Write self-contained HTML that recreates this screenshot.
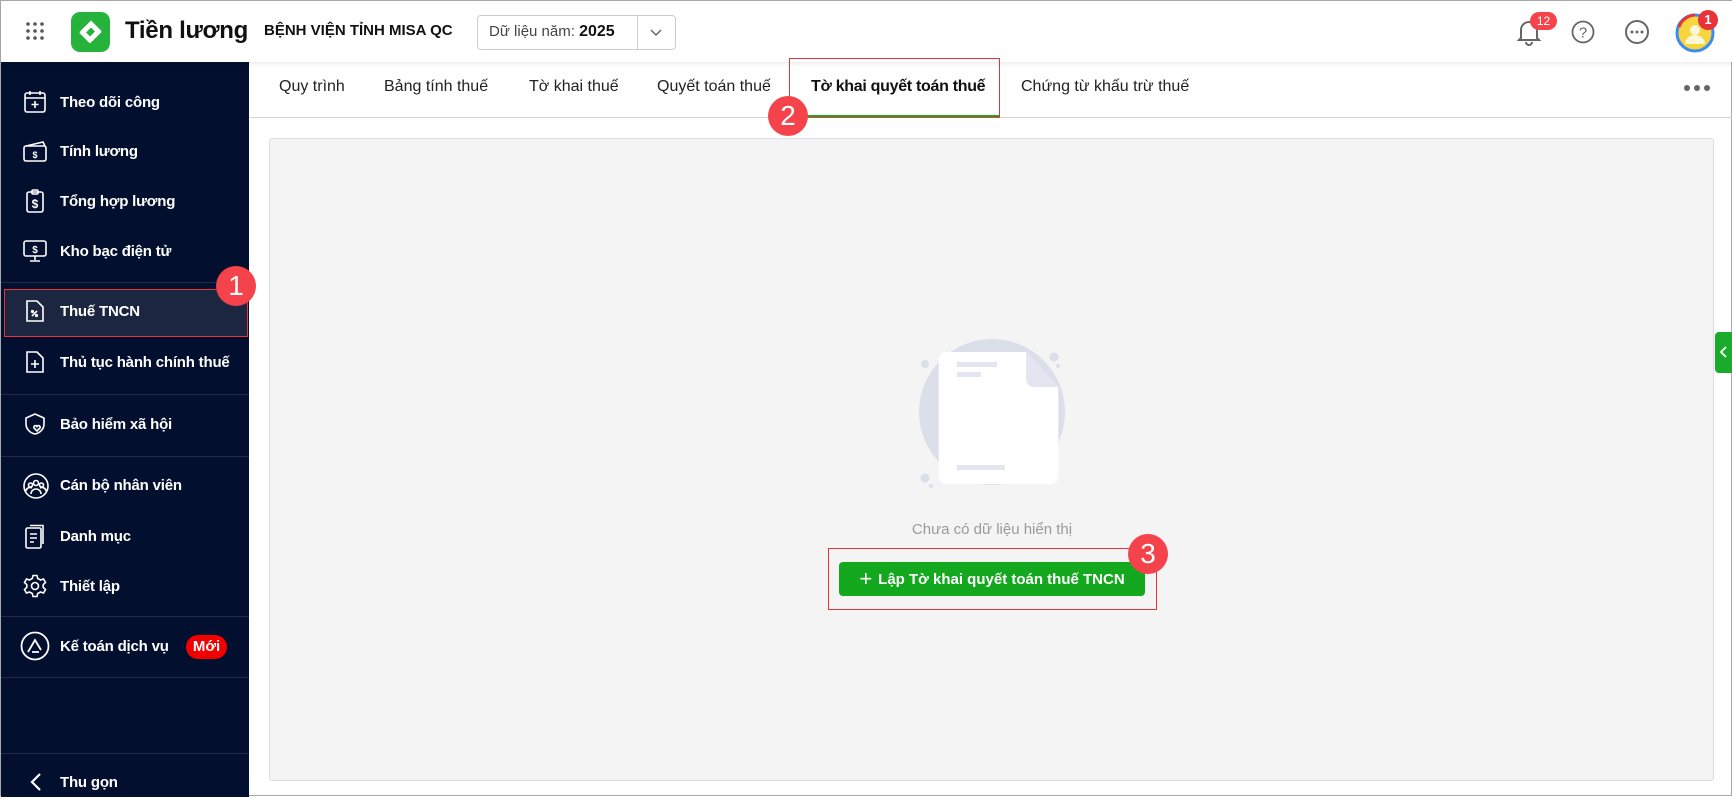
<!DOCTYPE html>
<html><head><meta charset="utf-8"><style>
*{box-sizing:border-box;margin:0;padding:0}
body{width:1732px;height:796px;overflow:hidden;background:#fff;font-family:"Liberation Sans",sans-serif;position:relative;border:1px solid #aaa}
.abs{position:absolute}
.hdr{left:0;top:0;width:1732px;height:61px;background:#fff;box-shadow:0 2px 4px rgba(0,0,0,.08);z-index:2}
.side{left:0;top:61px;width:248px;height:735px;background:#020f2e}
.it{position:absolute;left:0;width:248px;height:40px;color:#fff;font-size:15px;font-weight:bold;display:flex;align-items:center}
.it span{position:absolute;left:59px;letter-spacing:-0.2px}
.it svg{position:absolute;left:22px;top:8px}
.dv{position:absolute;left:0;width:248px;height:1px;background:#1f2a47}
.tab{position:absolute;top:77px;font-size:16px;color:#222}
.badge{position:absolute;width:40px;height:40px;border-radius:50%;background:#f4434a;color:#fff;font-size:28px;text-align:center;line-height:40px;font-weight:normal;z-index:4}
</style></head><body>
<div class="abs hdr">
 <svg class="abs" style="left:24px;top:20px" width="20" height="20"><g fill="#555"><circle cx="3" cy="3" r="1.8"/><circle cx="10" cy="3" r="1.8"/><circle cx="17" cy="3" r="1.8"/><circle cx="3" cy="10" r="1.8"/><circle cx="10" cy="10" r="1.8"/><circle cx="17" cy="10" r="1.8"/><circle cx="3" cy="17" r="1.8"/><circle cx="10" cy="17" r="1.8"/><circle cx="17" cy="17" r="1.8"/></g></svg>
 <div class="abs" style="left:70px;top:11px;width:39px;height:40px;border-radius:9px;background:#25b33b"></div>
 <svg class="abs" style="left:70px;top:11px" width="39" height="40"><g stroke="#fff" stroke-width="5" fill="none" stroke-linecap="square"><path d="M12 20 L20 12 L27 19"/><path d="M12 21 L19 28 L27 20"/></g></svg>
 <div class="abs" style="left:124px;top:16px;font-size:24px;font-weight:bold;color:#111;letter-spacing:-0.3px">Tiền lương</div>
 <div class="abs" style="left:263px;top:21px;font-size:15px;font-weight:bold;color:#111">BỆNH VIỆN TỈNH MISA QC</div>
 <div class="abs" style="left:476px;top:14px;width:199px;height:35px;border:1px solid #ccc;border-radius:4px"></div>
 <div class="abs" style="left:636px;top:14px;width:1px;height:35px;background:#ccc"></div>
 <div class="abs" style="left:488px;top:22px;font-size:15px;color:#444">Dữ liệu năm: <b style="color:#111;font-size:16px">2025</b></div>
 <svg class="abs" style="left:648px;top:24px" width="14" height="14"><path d="M2 5 L7 10 L12 5" stroke="#666" stroke-width="1.5" fill="none"/></svg>
 <svg class="abs" style="left:1514px;top:16px" width="28" height="30"><path d="M6 21 V13 a8 8 0 0 1 16 0 V21 L24 23 H4 Z M11 25 a3 3 0 0 0 6 0" stroke="#666" stroke-width="2" fill="none"/></svg>
 <div class="abs" style="left:1529px;top:11px;width:27px;height:18px;border-radius:9px;background:#f4434a;color:#fff;font-size:12px;text-align:center;line-height:18px">12</div>
 <svg class="abs" style="left:1569px;top:18px" width="26" height="26"><circle cx="13" cy="13" r="10.5" stroke="#666" stroke-width="1.8" fill="none"/><text x="13" y="18.5" font-size="15" text-anchor="middle" fill="#666" font-family="Liberation Sans">?</text></svg>
 <svg class="abs" style="left:1623px;top:18px" width="26" height="26"><circle cx="13" cy="13" r="11" stroke="#666" stroke-width="2" fill="none"/><g fill="#666"><circle cx="8" cy="13" r="1.5"/><circle cx="13" cy="13" r="1.5"/><circle cx="18" cy="13" r="1.5"/></g></svg>
 <svg class="abs" style="left:1673px;top:10px" width="42" height="42"><circle cx="21" cy="22" r="18" fill="#f6d53f" stroke="#3b8cf0" stroke-width="3"/><path d="M5 16 A18 18 0 0 1 21 4" stroke="#e8333a" stroke-width="3" fill="none"/><circle cx="21" cy="19" r="5" fill="#fff" opacity=".8"/><path d="M11 33 a10 9 0 0 1 20 0" fill="#fff" opacity=".8"/></svg>
 <div class="abs" style="left:1697px;top:9px;width:20px;height:20px;border-radius:50%;background:#e8333a;color:#fff;font-size:13px;font-weight:bold;text-align:center;line-height:20px">1</div>
</div>
<div class="abs side">
 <div class="it" style="top:20px"><svg width="24" height="24" fill="none" stroke="#fff" stroke-width="1.6"><rect x="2" y="3" width="20" height="19" rx="2"/><path d="M2 8 H22 M7 1 V5 M17 1 V5 M12 11 V18 M8.5 14.5 H15.5"/></svg><span>Theo dõi công</span></div>
 <div class="it" style="top:69px"><svg width="26" height="24" fill="none" stroke="#fff" stroke-width="1.6"><rect x="1" y="7" width="22" height="15" rx="2"/><path d="M3 7 L20 3 L22 7"/><text x="12" y="19" font-size="9" fill="#fff" stroke="none" text-anchor="middle" font-family="Liberation Sans" font-weight="bold">$</text></svg><span>Tính lương</span></div>
 <div class="it" style="top:119px"><svg width="24" height="24" fill="none" stroke="#fff" stroke-width="1.6"><rect x="4" y="3" width="16" height="20" rx="2"/><rect x="9" y="1" width="6" height="4" rx="1"/><text x="12" y="19" font-size="12" fill="#fff" stroke="none" text-anchor="middle" font-family="Liberation Sans" font-weight="bold">$</text></svg><span>Tổng hợp lương</span></div>
 <div class="it" style="top:169px"><svg width="24" height="24" fill="none" stroke="#fff" stroke-width="1.6"><rect x="1" y="2" width="22" height="15" rx="2"/><path d="M12 17 V21 M7 22 H17"/><text x="12" y="14" font-size="10" fill="#fff" stroke="none" text-anchor="middle" font-family="Liberation Sans" font-weight="bold">$</text></svg><span>Kho bạc điện tử</span></div>
 <div class="dv" style="top:220px"></div>
 <div class="abs" style="left:3px;top:227px;width:244px;height:48px;background:#1c2641;border:1.5px solid #e8333a"></div>
 <div class="it" style="top:229px"><svg width="24" height="24" fill="none" stroke="#fff" stroke-width="1.6"><path d="M4 2 H14 L20 8 V22 H4 Z"/><path d="M9 17 L14 12"/><circle cx="9.5" cy="12.5" r=".8"/><circle cx="13.5" cy="16.5" r=".8"/></svg><span>Thuế TNCN</span></div>
 <div class="badge" style="left:215px;top:204px">1</div>
 <div class="it" style="top:280px"><svg width="24" height="24" fill="none" stroke="#fff" stroke-width="1.6"><path d="M4 2 H14 L20 8 V22 H4 Z"/><path d="M12 10 V18 M8 14 H16"/></svg><span>Thủ tục hành chính thuế</span></div>
 <div class="dv" style="top:332px"></div>
 <div class="it" style="top:342px"><svg width="24" height="24" fill="none" stroke="#fff" stroke-width="1.6"><path d="M12 2 L21 6 V12 C21 17 17 21 12 22 C7 21 3 17 3 12 V6 Z"/><path d="M14 19 l3 -3 a1.5 1.5 0 0 0 -3 -1.5 a1.5 1.5 0 0 0 -3 1.5 Z" fill="#020f2e"/></svg><span>Bảo hiểm xã hội</span></div>
 <div class="dv" style="top:394px"></div>
 <div class="it" style="top:403px"><svg width="26" height="26" fill="none" stroke="#fff" stroke-width="1.6"><circle cx="13" cy="13" r="12"/><circle cx="13" cy="10" r="2.5"/><circle cx="7.5" cy="12" r="2"/><circle cx="18.5" cy="12" r="2"/><path d="M8 21 a5 5 0 0 1 10 0 M3 18 a4 4 0 0 1 6 -3 M23 18 a4 4 0 0 0 -6 -3"/></svg><span>Cán bộ nhân viên</span></div>
 <div class="it" style="top:454px"><svg width="24" height="26" fill="none" stroke="#fff" stroke-width="1.6"><rect x="3" y="4" width="15" height="20" rx="1.5"/><path d="M7 1.5 H20 V20 M7 10 H14 M7 14 H14 M7 18 H11"/></svg><span>Danh mục</span></div>
 <div class="it" style="top:504px"><svg width="24" height="24" fill="none" stroke="#fff" stroke-width="1.6"><path d="M10 1.5 H14 L14.7 4.5 L17.5 6 L20.5 5 L22.5 8.5 L20.2 10.6 V13.4 L22.5 15.5 L20.5 19 L17.5 18 L14.7 19.5 L14 22.5 H10 L9.3 19.5 L6.5 18 L3.5 19 L1.5 15.5 L3.8 13.4 V10.6 L1.5 8.5 L3.5 5 L6.5 6 L9.3 4.5 Z"/><circle cx="12" cy="12" r="3.5"/></svg><span>Thiết lập</span></div>
 <div class="dv" style="top:554px"></div>
 <div class="it" style="top:564px"><svg width="30" height="30" style="left:19px;top:5px" fill="none" stroke="#fff" stroke-width="1.8"><circle cx="15" cy="15" r="13.5"/><path d="M8 21 L15 9 L21 19 M12 21 H19"/></svg><span>Kế toán dịch vụ</span><div class="abs" style="left:185px;top:9px;width:41px;height:24px;border-radius:12px;background:#f20000;color:#fff;font-size:15px;text-align:center;line-height:24px">Mới</div></div>
 <div class="dv" style="top:615px"></div>
 <div class="dv" style="top:691px"></div>
 <div class="it" style="top:700px"><svg width="24" height="24" style="left:24px" fill="none" stroke="#fff" stroke-width="2.2"><path d="M15 4 L7 12 L15 20"/></svg><span>Thu gọn</span></div>
</div>
<div class="abs" style="left:248px;top:116px;width:1484px;height:1px;background:#d4d4d4"></div>
<div class="tab" style="left:278px">Quy trình</div>
<div class="tab" style="left:383px">Bảng tính thuế</div>
<div class="tab" style="left:528px">Tờ khai thuế</div>
<div class="tab" style="left:656px">Quyết toán thuế</div>
<div class="tab" style="left:810px;font-weight:bold;color:#111;letter-spacing:-0.3px">Tờ khai quyết toán thuế</div>
<div class="tab" style="left:1020px">Chứng từ khấu trừ thuế</div>
<div class="abs" style="left:788px;top:114px;width:211px;height:3px;background:#1aab2b"></div>
<div class="abs" style="left:788px;top:57px;width:211px;height:59px;border:1.5px solid #e8333a;z-index:3"></div>
<div class="badge" style="left:767px;top:95px">2</div>
<svg class="abs" style="left:1682px;top:82px" width="30" height="10"><g fill="#666"><circle cx="4" cy="5" r="3"/><circle cx="14" cy="5" r="3"/><circle cx="24" cy="5" r="3"/></g></svg>
<div class="abs" style="left:268px;top:137px;width:1445px;height:643px;background:#f4f4f4;border:1px solid #ddd;border-radius:3px"></div>
<div class="abs" style="left:1714px;top:331px;width:18px;height:41px;background:#1aab2b;border-radius:4px 0 0 4px"></div>
<svg class="abs" style="left:1717px;top:344px" width="12" height="14"><path d="M8 2 L3 7 L8 12" stroke="#fff" stroke-width="1.8" fill="none"/></svg>
<svg class="abs" style="left:900px;top:330px" width="180" height="170">
 <circle cx="91" cy="81" r="73" fill="#dadfe9"/>
 <circle cx="24" cy="33" r="4" fill="#dadfe9"/><circle cx="153" cy="26" r="4.5" fill="#dadfe9"/><circle cx="157" cy="35" r="2" fill="#dadfe9"/><circle cx="24" cy="147" r="4.5" fill="#dadfe9"/><circle cx="30" cy="155" r="2" fill="#dadfe9"/>
 <path d="M45 21 H132 L167 56 V145 a8 8 0 0 1 -8 8 H45 a8 8 0 0 1 -8 -8 V29 a8 8 0 0 1 8 -8 Z" fill="#fff" transform="scale(0.92 1) translate(4,0)"/>
 <path d="M132 21 L167 56 H140 a8 8 0 0 1 -8 -8 Z" fill="#e3e6f0" transform="scale(0.92 1) translate(4,0)"/>
 <rect x="56" y="31" width="40" height="5" fill="#e3e6f0"/><rect x="56" y="41" width="24" height="5" fill="#e3e6f0"/><rect x="56" y="134" width="48" height="5" fill="#e3e6f0"/>
</svg>
<div class="abs" style="left:868px;top:520px;width:246px;text-align:center;font-size:15px;color:#9a9a9a">Chưa có dữ liệu hiển thị</div>
<div class="abs" style="left:838px;top:561px;width:306px;height:34px;border-radius:4px;background:#14a81f;color:#fff;font-size:15px;font-weight:bold;line-height:34px;text-align:center"><span style="font-size:22px;font-weight:normal;vertical-align:-2px;margin-right:6px">+</span>Lập Tờ khai quyết toán thuế TNCN</div>
<div class="abs" style="left:827px;top:547px;width:329px;height:62px;border:1.5px solid #e8333a"></div>
<div class="badge" style="left:1127px;top:533px">3</div>
</body></html>
